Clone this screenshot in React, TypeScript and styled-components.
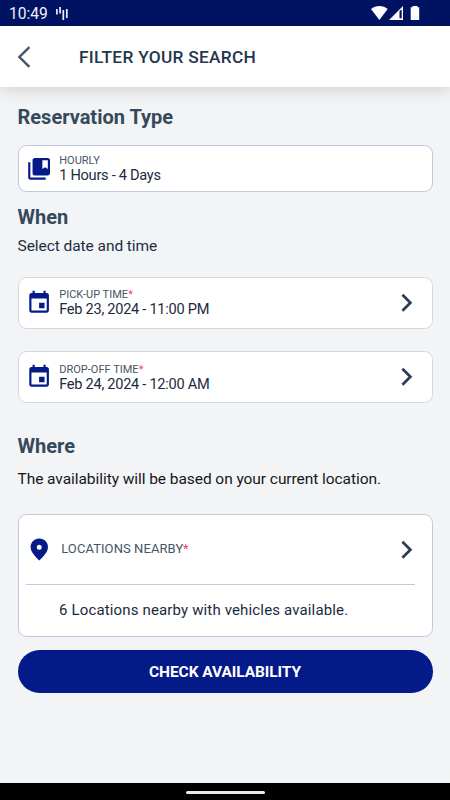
import React from "react";
import styled, { createGlobalStyle } from "styled-components";

const GlobalStyle = createGlobalStyle`
  *, *::before, *::after { box-sizing: border-box; }
  body { margin: 0; background: #f3f4f6; font-family: Roboto, sans-serif; }
`;

const Screen = styled.div`
  width: 450px;
  height: 800px;
  display: flex;
  flex-direction: column;
  background: #f3f4f6;
  overflow: hidden;
`;

const StatusBar = styled.div`
  height: 26px;
  flex: none;
  display: flex;
  align-items: center;
  padding: 0 30px 0 9px;
  background: #001363;
  color: #f2f3fa;
`;

const Clock = styled.span`
  font-size: 15.6px;
  line-height: 26px;
  padding-top: 1px;
  width: 46px;
  white-space: nowrap;
`;

const StatusIcons = styled.svg`
  display: block;
  margin-left: auto;
`;

const Header = styled.header`
  height: 61.3px;
  flex: none;
  display: flex;
  align-items: center;
  padding-left: 17px;
  background: #fff;
  box-shadow: 0 2px 16px rgba(0, 0, 0, 0.16);
  z-index: 1;
`;

const BackButton = styled.button`
  width: 62px;
  height: 22px;
  padding: 0;
  border: 0;
  background: none;
  display: flex;
`;

const Title = styled.h1`
  margin: 0;
  font-size: 17.3px;
  line-height: 22px;
  font-weight: 470;
  letter-spacing: 0.29px;
  color: #22364c;
  white-space: nowrap;
`;

const Content = styled.main`
  flex: 1;
  padding: 17.7px 17.5px 0;
`;

const Heading = styled.h2<{ $top?: number }>`
  margin: ${(p) => p.$top ?? 0}px 0 0;
  font-size: 20px;
  line-height: 24px;
  font-weight: 700;
  color: #36495c;
  white-space: nowrap;
`;

const Hint = styled.p<{ $top: number; $dark?: boolean }>`
  margin: ${(p) => p.$top}px 0 0;
  font-size: 15.5px;
  line-height: 20px;
  font-weight: 380;
  letter-spacing: -0.06px;
  color: ${(p) => (p.$dark ? "#15171b" : "#203044")};
  white-space: nowrap;
`;

const Card = styled.section<{ $top: number; $height: number; $soft?: boolean }>`
  margin-top: ${(p) => p.$top}px;
  height: ${(p) => p.$height}px;
  border: 1px solid ${(p) => (p.$soft ? "#cfd7e1" : "#bfc9dc")};
  border-radius: 8.5px;
  background: #fff;
`;

const Row = styled.div<{ $height?: number }>`
  height: ${(p) => (p.$height ? `${p.$height}px` : "100%")};
  display: flex;
  align-items: center;
  padding: 0 16px 0 7.5px;
`;

const RowText = styled.div<{ $indent?: number }>`
  flex: 1;
  padding: 0 0 2px ${(p) => p.$indent ?? 7}px;
`;

const Label = styled.div<{ $large?: boolean }>`
  font-size: ${(p) => (p.$large ? 13 : 11)}px;
  line-height: 15px;
  font-weight: 380;
  letter-spacing: ${(p) => (p.$large ? 0.08 : 0.02)}px;
  color: #465566;
  white-space: nowrap;
`;

const Required = styled.span`
  color: #fb3e5a;
`;

const Value = styled.div`
  font-size: 14.6px;
  line-height: 14px;
  font-weight: 380;
  letter-spacing: -0.28px;
  color: #1c2b3e;
  white-space: nowrap;
`;

const Divider = styled.div`
  height: 1px;
  margin: 0 16.5px 0 7.5px;
  background: #bfc9dc;
`;

const Availability = styled.p`
  margin: 15.3px 0 0 40.5px;
  font-size: 15px;
  line-height: 20px;
  font-weight: 380;
  letter-spacing: 0.15px;
  color: #1c2b3e;
  white-space: nowrap;
`;

const PrimaryButton = styled.button`
  display: block;
  width: 100%;
  height: 43px;
  margin-top: 13.5px;
  padding: 1px 0 0;
  border: 0;
  border-radius: 22px;
  background: #051a89;
  color: #fff;
  font: 700 15.5px/43px Roboto, sans-serif;
  letter-spacing: -0.08px;
`;

const NavBar = styled.div`
  height: 17.5px;
  flex: none;
  display: flex;
  justify-content: center;
  padding-top: 8.5px;
  background: #000;
`;

const NavHandle = styled.div`
  width: 79px;
  height: 2.5px;
  border-radius: 2px;
  background: #eceae7;
`;

const BookmarkIcon = () => (
  <svg width="26.2" height="26.2" viewBox="0 0.2 24 24" fill="#051a89">
    <path d="M4 6H2v14c0 1.1.9 2 2 2h14v-2H4V6zM20 2H8c-1.1 0-2 .9-2 2v12c0 1.1.9 2 2 2h12c1.1 0 2-.9 2-2V4c0-1.1-.9-2-2-2zm0 10l-2.5-1.5L15 12V4h5v8z" />
  </svg>
);

const CalendarIcon = () => (
  <svg width="26.2" height="26.4" viewBox="0 0.3 24 24" fill="#051a89">
    <path d="M17 12h-5v5h5v-5zM16 1v2H8V1H6v2H5c-1.11 0-1.99.9-1.99 2L3 19c0 1.1.89 2 2 2h14c1.1 0 2-.9 2-2V5c0-1.1-.9-2-2-2h-1V1h-2zm3 18H5V8h14v11z" />
  </svg>
);

const PinIcon = () => (
  <svg width="26.2" height="26" viewBox="-0.3 0.4 26.2 26" fill="#051a89">
    <path
      fillRule="evenodd"
      d="M13 2C8 2 4.300 5.800 4.300 10.500C4.300 15.500 9 20 13 24C17 20 21.700 15.500 21.700 10.500C21.700 5.800 18 2 13 2ZM13 8.100A2.500 2.500 0 1 1 13 13.100A2.500 2.500 0 1 1 13 8.100Z"
    />
  </svg>
);

const ChevronIcon = () => (
  <svg width="18" height="20" viewBox="0.4 0.2 18 20" fill="none" stroke="#2b3d53" strokeWidth="2.7">
    <path d="M4.800 2L12.800 10L4.800 18" />
  </svg>
);

interface TimeCardProps {
  label: string;
  value: string;
  top: number;
}

const TimeCard = ({ label, value, top }: TimeCardProps) => (
  <Card $top={top} $height={52} $soft>
    <Row>
      <CalendarIcon />
      <RowText>
        <Label>
          {label}
          <Required>*</Required>
        </Label>
        <Value>{value}</Value>
      </RowText>
      <ChevronIcon />
    </Row>
  </Card>
);

export default function App() {
  return (
    <>
      <GlobalStyle />
      <Screen>
        <StatusBar>
          <Clock>10:49</Clock>
          <svg width="14" height="16" viewBox="0 0 14 16" stroke="#eceef7" strokeWidth="1.700">
            <path d="M1.900 4V9.500M5.100 2V8.500M8.300 5V15M11.800 4V13" />
          </svg>
          <StatusIcons width="49" height="16" viewBox="0 0 49 16" fill="#fff">
            <path d="M0 4C4.500 0 12.200 0 16.700 4L8.350 15Z" />
            <path fillRule="evenodd" d="M32 1V15H18ZM28.500 6V13.300H30.700V4.500Z" />
            <path d="M41.500 1H46.500V2.300H48.200V15H39.700V2.300H41.500Z" />
          </StatusIcons>
        </StatusBar>
        <Header>
          <BackButton aria-label="Back">
            <svg width="14" height="22" viewBox="0 0 14 22" fill="none" stroke="#42566a" strokeWidth="2.400">
              <path d="M12.400 1.200L2.400 11L12.400 20.800" />
            </svg>
          </BackButton>
          <Title>FILTER YOUR SEARCH</Title>
        </Header>
        <Content>
          <Heading>Reservation Type</Heading>
          <Card $top={16.5} $height={46.5}>
            <Row>
              <BookmarkIcon />
              <RowText>
                <Label>HOURLY</Label>
                <Value>1 Hours - 4 Days</Value>
              </RowText>
            </Row>
          </Card>
          <Heading $top={13}>When</Heading>
          <Hint $top={7}>Select date and time</Hint>
          <TimeCard top={21} label="PICK-UP TIME" value="Feb 23, 2024 - 11:00 PM" />
          <TimeCard top={22.3} label="DROP-OFF TIME" value="Feb 24, 2024 - 12:00 AM" />
          <Heading $top={30.5}>Where</Heading>
          <Hint $top={11.2} $dark>
            The availability will be based on your current location.
          </Hint>
          <Card $top={25.4} $height={122.5}>
            <Row $height={68.5}>
              <PinIcon />
              <RowText $indent={9}>
                <Label $large>
                  LOCATIONS NEARBY<Required>*</Required>
                </Label>
              </RowText>
              <ChevronIcon />
            </Row>
            <Divider />
            <Availability>6 Locations nearby with vehicles available.</Availability>
          </Card>
          <PrimaryButton>CHECK AVAILABILITY</PrimaryButton>
        </Content>
        <NavBar>
          <NavHandle />
        </NavBar>
      </Screen>
    </>
  );
}
